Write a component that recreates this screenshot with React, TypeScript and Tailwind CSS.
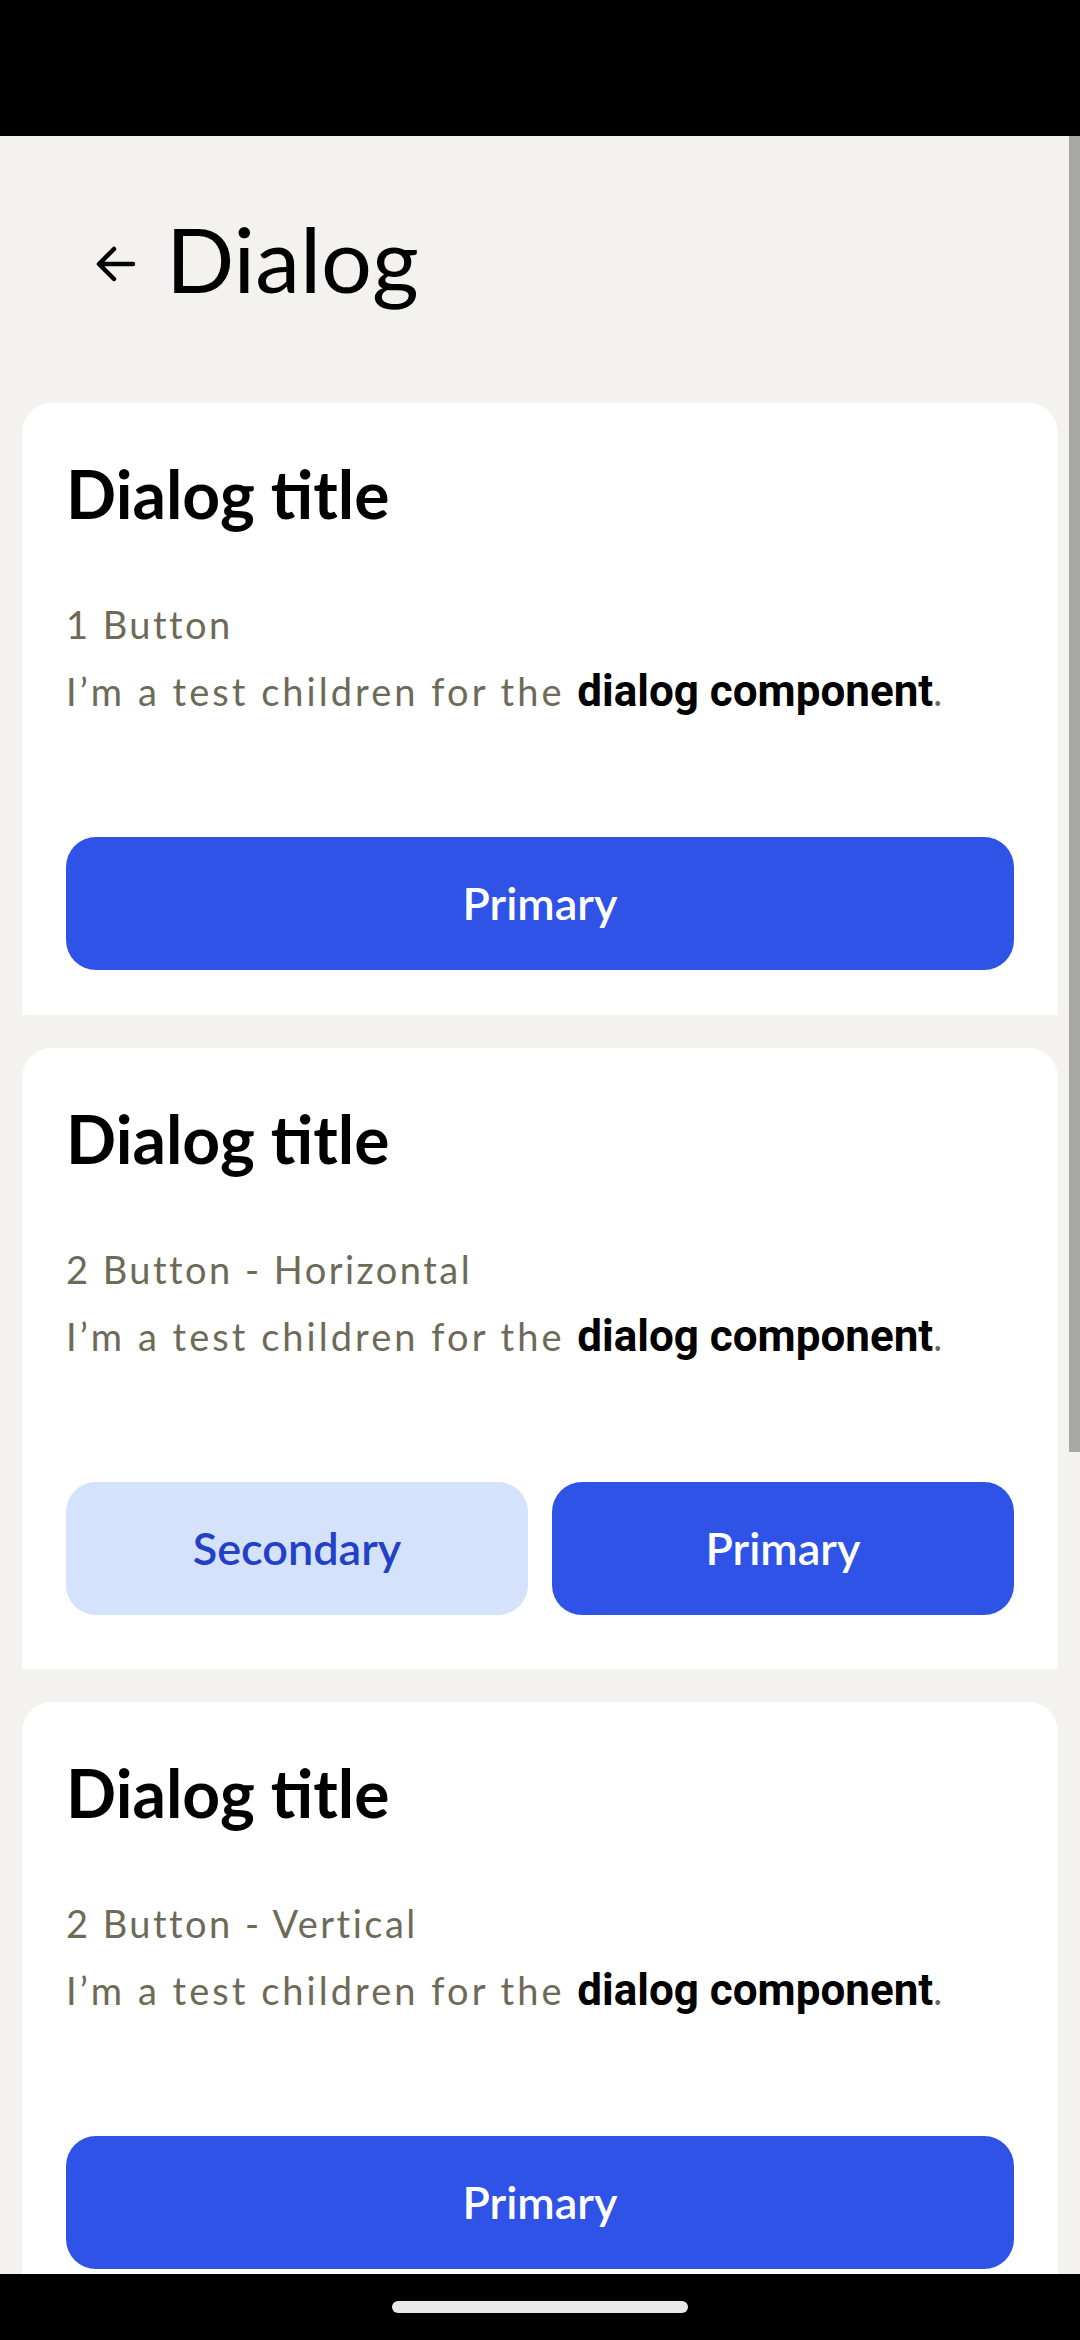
type Variant = 'primary' | 'secondary';

function ActionButton({ label, variant }: { label: string; variant: Variant }) {
  const look =
    variant === 'primary'
      ? 'bg-[#2e53e6] text-white'
      : 'bg-[#d5e2fc] text-[#2340c8]';
  return (
    <button
      className={`flex h-[133px] w-full shrink-0 items-center justify-center rounded-[30px] text-[45px] font-semibold ${look}`}
    >
      {label}
    </button>
  );
}

function DialogCard({
  subtitle,
  layout,
  pb,
}: {
  subtitle: string;
  layout: 'single' | 'row';
  pb: string;
}) {
  return (
    <div className={`mx-[22px] shrink-0 rounded-t-[30px] bg-white px-[44px] pt-[51px] ${pb}`}>
      <h2 className="text-[66px] font-bold leading-[80px] text-black">Dialog title</h2>
      <div className="mt-[66px] text-[38px] leading-[48px] tracking-[0.065em] text-[#6e6a58]">
        {subtitle}
      </div>
      <div className="mt-[19px] text-[38px] leading-[48px] tracking-[0.08em] text-[#6e6a58]">
        I’m a test children for the{' '}
        <span className="font-['Roboto',sans-serif] text-[44px] font-bold leading-none tracking-normal text-black">
          dialog component
        </span>
        .
      </div>
      <div className="mt-[122px]">
        {layout === 'single' && <ActionButton label="Primary" variant="primary" />}
        {layout === 'row' && (
          <div className="flex gap-[24px]">
            <div className="flex-1">
              <ActionButton label="Secondary" variant="secondary" />
            </div>
            <div className="flex-1">
              <ActionButton label="Primary" variant="primary" />
            </div>
          </div>
        )}
      </div>
    </div>
  );
}

export default function App() {
  return (
    <div className="relative flex h-[2340px] w-[1080px] flex-col overflow-hidden bg-black font-['Lato',sans-serif]">
      <div className="h-[136px] shrink-0 bg-black" />

      <div className="min-h-0 flex-1 overflow-hidden bg-[#f3f2ee]">
        <div className="flex items-center gap-[30px] pb-[91px] pl-[96px] pt-[68px]">
          <svg width="40" height="36" viewBox="0 0 40 36" className="mt-[12px]" fill="none">
            <path
              d="M37 18H3M18 3 3 18l15 15"
              stroke="#000"
              strokeWidth="4.5"
              strokeLinecap="round"
              strokeLinejoin="round"
            />
          </svg>
          <h1 className="text-[90px] leading-[108px] text-black">Dialog</h1>
        </div>

        <div className="flex flex-col gap-[33px]">
          <DialogCard subtitle="1 Button" layout="single" pb="pb-[45px]" />
          <DialogCard subtitle="2 Button - Horizontal" layout="row" pb="pb-[54px]" />
          <DialogCard subtitle="2 Button - Vertical" layout="single" pb="pb-[56px]" />
        </div>
      </div>

      <div className="flex h-[66px] shrink-0 items-center justify-center bg-black">
        <div className="h-[12px] w-[296px] rounded-full bg-[#e8e8e8]" />
      </div>

      {/* scrollbar */}
      <div className="absolute right-0 top-[136px] h-[1316px] w-[11px] bg-[#a8a8a4]" />
    </div>
  );
}
